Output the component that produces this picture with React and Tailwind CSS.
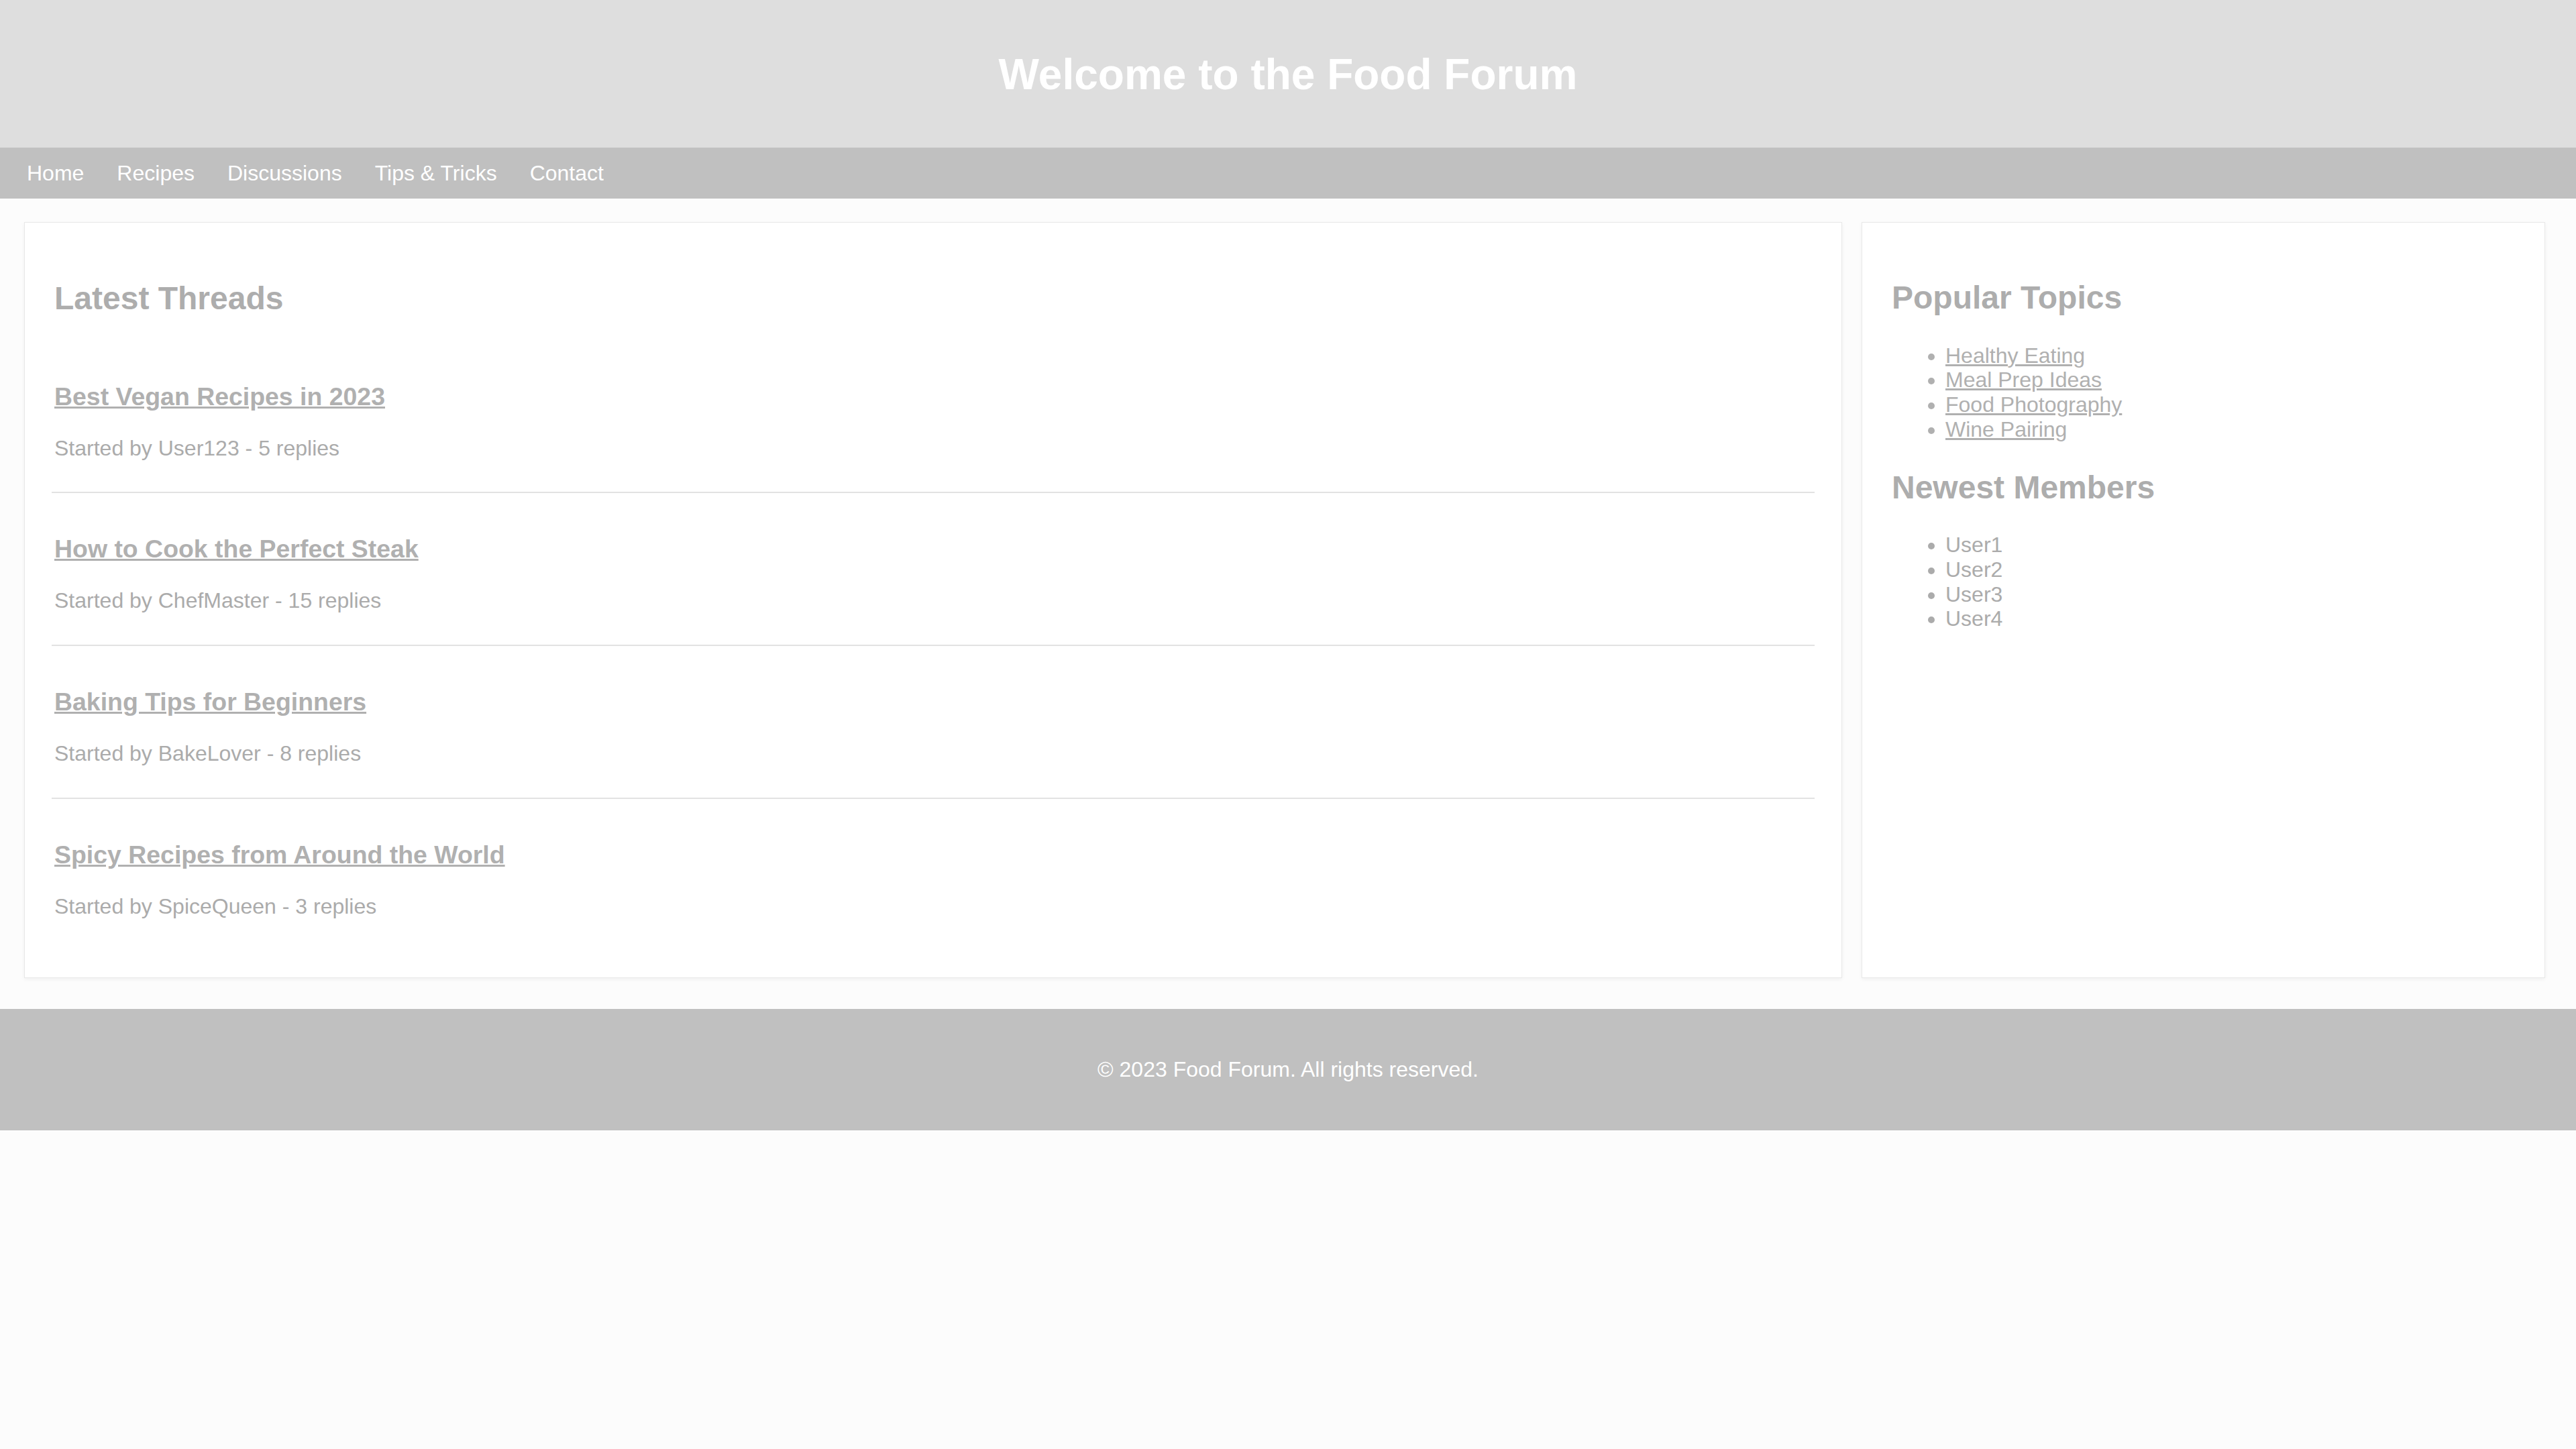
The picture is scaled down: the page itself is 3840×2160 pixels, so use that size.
import React from 'react';

const threads = [
  { title: 'Best Vegan Recipes in 2023', author: 'User123', replies: 5 },
  { title: 'How to Cook the Perfect Steak', author: 'ChefMaster', replies: 15 },
  { title: 'Baking Tips for Beginners', author: 'BakeLover', replies: 8 },
  { title: 'Spicy Recipes from Around the World', author: 'SpiceQueen', replies: 3 },
];

const topics = ['Healthy Eating', 'Meal Prep Ideas', 'Food Photography', 'Wine Pairing'];
const members = ['User1', 'User2', 'User3', 'User4'];
const navLinks = ['Home', 'Recipes', 'Discussions', 'Tips & Tricks', 'Contact'];

export default function App() {
  return (
    <div className="min-h-screen bg-[#fcfcfc] font-['Liberation_Sans',Arial,sans-serif]">
      {/* Header */}
      <header className="bg-[#dedede] py-[30px] text-center">
        <h1 className="mt-[45px] mb-[41px] text-[64px] leading-[1.15] font-bold text-white">
          Welcome to the Food Forum
        </h1>
      </header>

      {/* Nav */}
      <nav className="bg-[#c0c0c0] py-[20px] pl-[40px]">
        <ul className="flex gap-[49px]">
          {navLinks.map((link) => (
            <li key={link}>
              <a href="#" className="text-[32px] leading-[1.15] text-white">
                {link}
              </a>
            </li>
          ))}
        </ul>
      </nav>

      {/* Main */}
      <main className="grid grid-cols-[2710px_1019px] gap-[29px] pt-[35px] pb-[46px] pl-[36px] pr-[46px]">
        {/* Latest threads */}
        <section className="bg-white border border-[#e8e8e8] shadow-[0_2px_6px_rgba(0,0,0,0.05)] py-[40px] pl-[44px] pr-[40px]">
          <h2 className="mt-[45px] mb-[35px] text-[48px] leading-[1.15] font-bold text-[#adadad]">Latest Threads</h2>
          {threads.map((t) => (
            <div key={t.title} className="-ml-[4px] pl-[4px] pt-[25px] pb-[15px] border-b-2 border-[#e2e2e2] last:border-b-0">
              <h3 className="my-[37px] text-[37.44px] leading-[1.15] font-bold">
                <a href="#" className="text-[#b0b0b0] underline">{t.title}</a>
              </h3>
              <p className="mb-[32px] text-[32px] leading-[1.15] text-[#ababab]">
                Started by {t.author} - {t.replies} replies
              </p>
            </div>
          ))}
        </section>

        {/* Sidebar */}
        <aside className="bg-white border border-[#e8e8e8] shadow-[0_2px_6px_rgba(0,0,0,0.05)] py-[40px] pl-[44px] pr-[40px]">
          <h2 className="mt-[44px] mb-[40px] text-[48px] leading-[1.15] font-bold text-[#adadad]">Popular Topics</h2>
          <ul className="list-disc pl-[80px] text-[32px] leading-[1.15] text-[#b0b0b0]">
            {topics.map((topic) => (
              <li key={topic}>
                <a href="#" className="text-[#b0b0b0] underline">{topic}</a>
              </li>
            ))}
          </ul>
          <h2 className="my-[40px] text-[48px] leading-[1.15] font-bold text-[#adadad]">Newest Members</h2>
          <ul className="list-disc pl-[80px] text-[32px] leading-[1.15] text-[#ababab]">
            {members.map((m) => (
              <li key={m}>{m}</li>
            ))}
          </ul>
        </aside>
      </main>

      {/* Footer */}
      <footer className="bg-[#c0c0c0] py-[40px] text-center">
        <p className="my-[32px] text-[32px] leading-[1.15] text-white">© 2023 Food Forum. All rights reserved.</p>
      </footer>
    </div>
  );
}
